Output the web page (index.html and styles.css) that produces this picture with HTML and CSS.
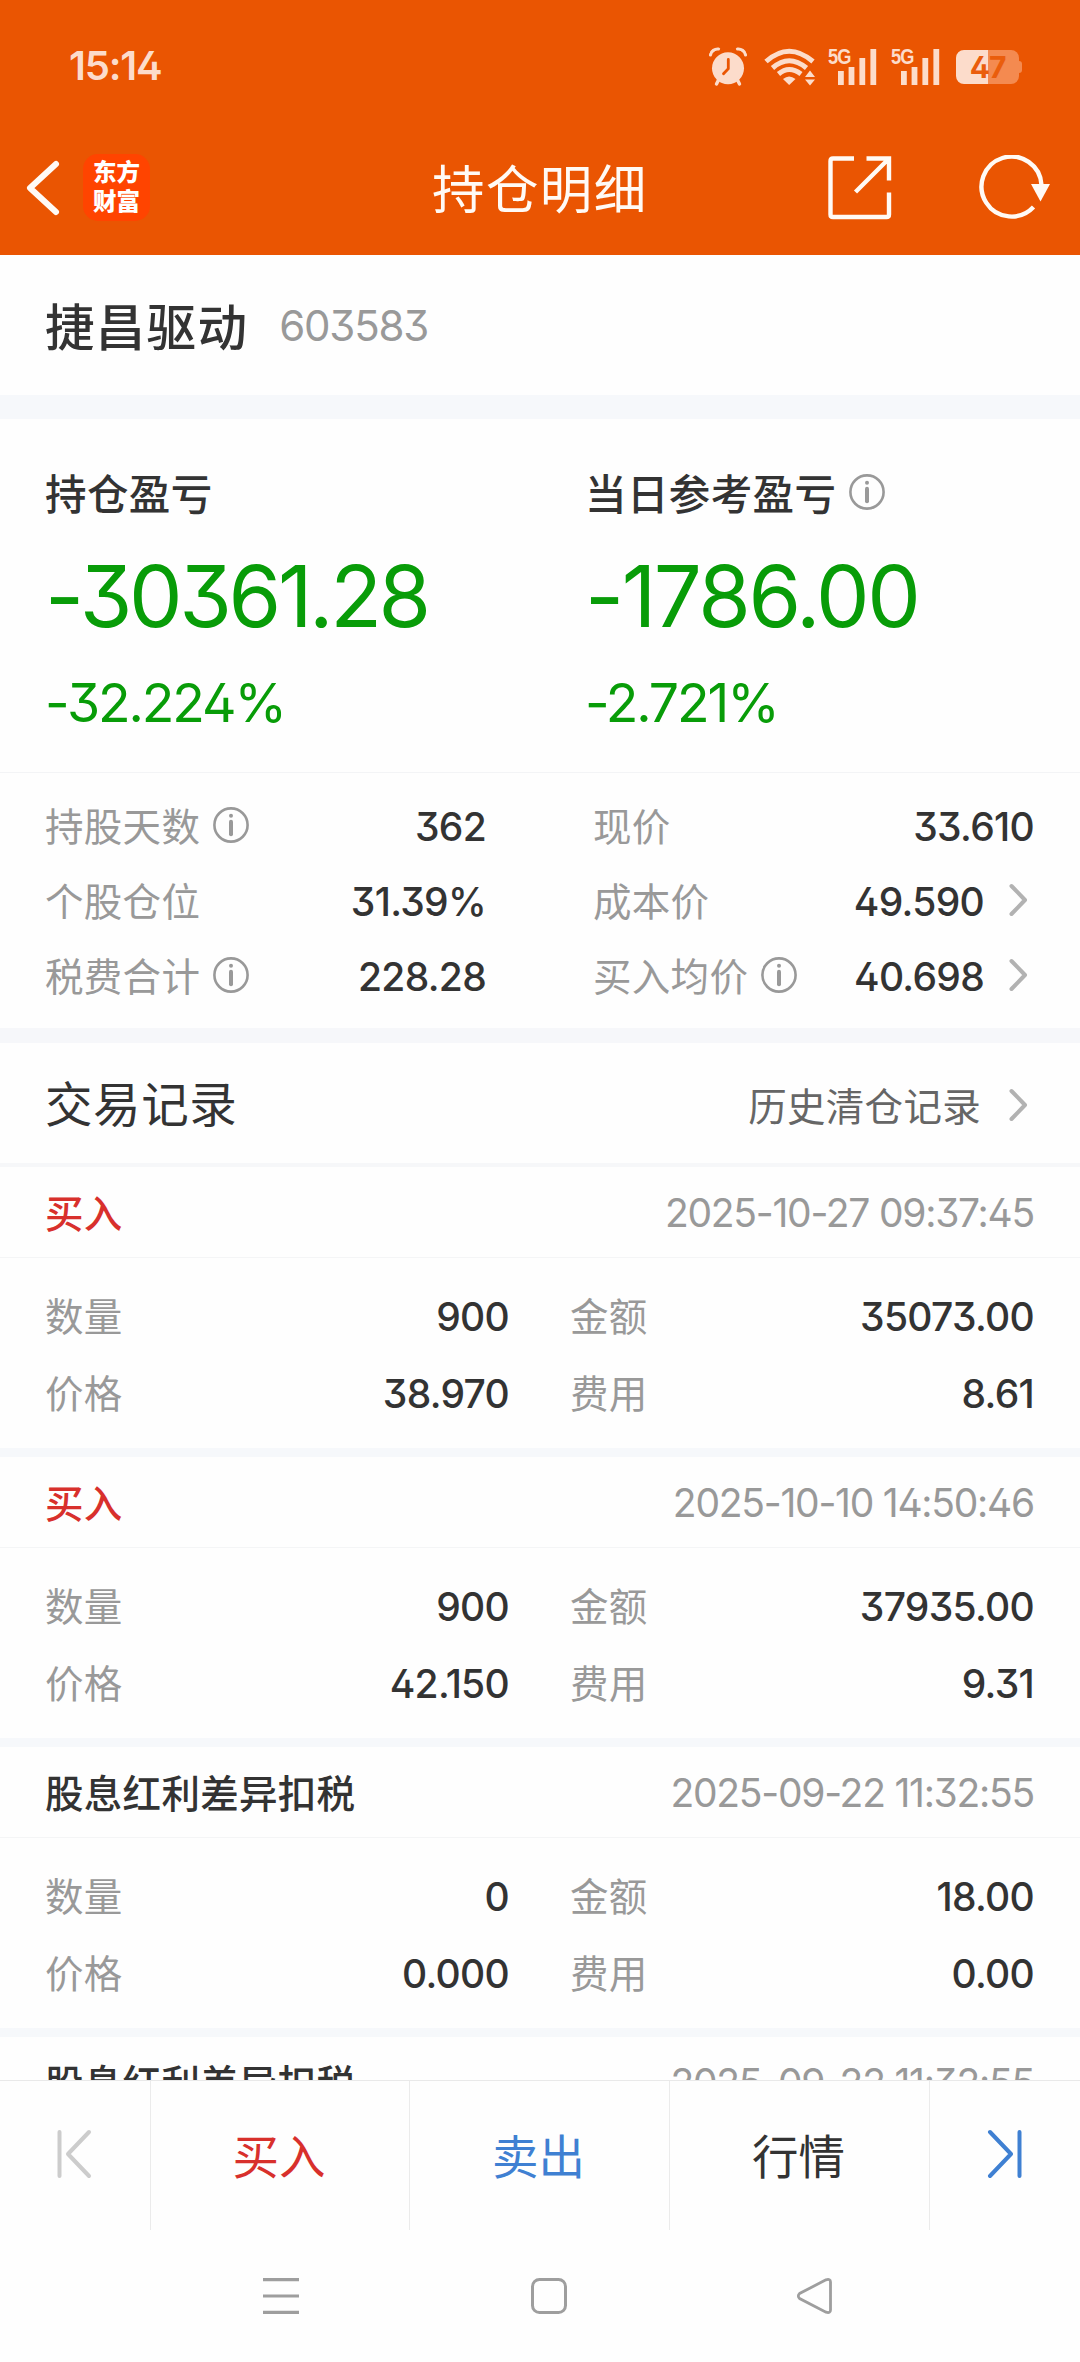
FILE: index.html
```html
<!DOCTYPE html>
<html lang="zh-CN">
<head>
<meta charset="utf-8">
<title>持仓明细</title>
<link rel="stylesheet" href="styles.css">
</head>
<body>
<svg class="defs" width="0" height="0" aria-hidden="true">
  <symbol id="info" viewBox="0 0 36 36"><circle cx="18" cy="18" r="16.6" fill="none" stroke="#999" stroke-width="2.6"/><circle cx="18" cy="8.8" r="2" fill="#999"/><path d="M18 14.8V27.2" stroke="#999" stroke-width="4" stroke-linecap="round"/></symbol>
  <symbol id="chev" viewBox="0 0 20 34"><path d="M2.5 3 16 17 2.5 31" fill="none" stroke="#b2b2b2" stroke-width="4" stroke-linecap="round" stroke-linejoin="round"/></symbol>
  <symbol id="bars" viewBox="0 0 39 36"><path d="M0 22h5.8v14H0zM10.6 18h5.8v18h-5.8zM21.4 9h5.8v27h-5.8zM32.4 0h5.8v36h-5.8z" fill="#fcdccb"/></symbol>
</svg>
<header class="top">
  <div class="status">
    <span class="clock">15:14</span>
    <div class="sysicons">
      <svg class="alarm" width="38" height="40" viewBox="0 0 38 40"><g fill="#fcdccb"><circle cx="19" cy="21.2" r="16"/><path d="M.5 9.500C-.5 4 5 .5 11.500 1 6.500 3 3 6 .5 9.500zM37.500 9.500C38.500 4 33 .5 26.500 1 31.500 3 35 6 37.500 9.500z"/></g><path d="M1.500 8C2 4 6 1.600 9.500 2M36.500 8C36 4 32 1.600 28.500 2" stroke="#fcdccb" stroke-width="3" fill="none" stroke-linecap="round"/><path d="M9.500 33 7.500 37M28.500 33l2 4" stroke="#fcdccb" stroke-width="3.400" stroke-linecap="round"/><path d="M19.300 12.500v9.300l-4.800 5" fill="none" stroke="#ea5502" stroke-width="2.800" stroke-linecap="round"/></svg>
      <svg class="wifi" width="52" height="38" viewBox="0 0 52 38"><g fill="none" stroke="#fcdccb" stroke-width="5"><path d="M2 13.500Q25 -7 49 13.500"/><path d="M8.500 20Q25 5.500 42.500 20"/><path d="M14.500 26Q25 17 37 26"/></g><path d="M19 31Q25 26 31.500 31L25.200 37z" fill="#fcdccb"/><path d="M41 29l5-6.500 5 6.500zM41 31.500h10l-5 6z" fill="#fcdccb"/></svg>
      <div class="sig"><span>5G</span><svg width="39" height="36"><use href="#bars"/></svg></div>
      <div class="sig"><span>5G</span><svg width="39" height="36"><use href="#bars"/></svg></div>
      <div class="battery"><span>47</span></div>
    </div>
  </div>
  <div class="navbar">
    <svg class="back" width="36" height="58" viewBox="0 0 36 58"><path d="M31 5 5 29 31 53" fill="none" stroke="#fffaf5" stroke-width="6" stroke-linecap="round" stroke-linejoin="round"/></svg>
    <div class="logo"><span>东方</span><span>财富</span></div>
    <h1>持仓明细</h1>
    <svg class="share" width="64" height="64" viewBox="0 0 64 64"><path d="M26 2.500H5Q2.500 2.500 2.500 5V58.500Q2.500 61 5 61H58.500Q61 61 61 58.500V36.500M38.500 2.500H61V24.500M60.500 3 27.500 36" fill="none" stroke="#fffaf5" stroke-width="4.400"/></svg>
    <svg class="reload" width="72" height="66" viewBox="0 0 72 66"><path d="M62.500 30A30 30 0 1 0 54.500 52" fill="none" stroke="#fffaf5" stroke-width="4.400"/><path d="M52 29h19l-9.500 17.500z" fill="#fffaf5"/></svg>
  </div>
</header>
<main class="page">
  <section class="stock"><b>捷昌驱动</b><span>603583</span></section>
  <section class="profit">
    <div><h2>持仓盈亏</h2><p class="big">-30361.28</p><p class="pct">-32.224%</p></div>
    <div class="today"><h2>当日参考盈亏<svg class="info"><use href="#info"/></svg></h2><p class="big">-1786.00</p><p class="pct">-2.721%</p></div>
  </section>
  <section class="stats">
    <div class="col">
      <div class="line"><label>持股天数</label><svg class="info"><use href="#info"/></svg><em>362</em></div>
      <div class="line"><label>个股仓位</label><em>31.39%</em></div>
      <div class="line"><label>税费合计</label><svg class="info"><use href="#info"/></svg><em>228.28</em></div>
    </div>
    <div class="col">
      <div class="line"><label>现价</label><em>33.610</em></div>
      <div class="line"><label>成本价</label><em>49.590</em><svg class="chev"><use href="#chev"/></svg></div>
      <div class="line"><label>买入均价</label><svg class="info"><use href="#info"/></svg><em>40.698</em><svg class="chev"><use href="#chev"/></svg></div>
    </div>
  </section>
  <section class="records-head"><h3>交易记录</h3><span>历史清仓记录</span><svg class="chev"><use href="#chev"/></svg></section>
  <article class="rec">
    <div class="rec-head"><b class="buy">买入</b><time>2025-10-27 09:37:45</time></div>
    <div class="rec-body"><label>数量</label><em>900</em><label>金额</label><em>35073.00</em><label>价格</label><em>38.970</em><label>费用</label><em>8.61</em></div>
  </article>
  <article class="rec">
    <div class="rec-head"><b class="buy">买入</b><time>2025-10-10 14:50:46</time></div>
    <div class="rec-body"><label>数量</label><em>900</em><label>金额</label><em>37935.00</em><label>价格</label><em>42.150</em><label>费用</label><em>9.31</em></div>
  </article>
  <article class="rec">
    <div class="rec-head"><b>股息红利差异扣税</b><time>2025-09-22 11:32:55</time></div>
    <div class="rec-body"><label>数量</label><em>0</em><label>金额</label><em>18.00</em><label>价格</label><em>0.000</em><label>费用</label><em>0.00</em></div>
  </article>
  <article class="rec">
    <div class="rec-head"><b>股息红利差异扣税</b><time>2025-09-22 11:32:55</time></div>
  </article>
</main>
<nav class="tabs">
  <a class="prev"><svg width="36" height="50" viewBox="0 0 36 50"><path d="M3.500 3V47M33 3 12 25 33 47" fill="none" stroke="#ccc" stroke-width="4" stroke-linecap="round" stroke-linejoin="round"/></svg></a>
  <a class="t-buy">买入</a><a class="t-sell">卖出</a><a>行情</a>
  <a class="next"><svg width="36" height="50" viewBox="0 0 36 50"><path d="M32.500 3V47M3 3 24 25 3 47" fill="none" stroke="#3f80d2" stroke-width="4" stroke-linecap="round" stroke-linejoin="round"/></svg></a>
</nav>
<footer class="sysnav">
  <svg width="38" height="38" viewBox="0 0 38 38"><path d="M1 2.700H37M1 19H37M1 35.300H37" stroke="#9e9e9e" stroke-width="3.200"/></svg>
  <svg width="38" height="38" viewBox="0 0 38 38"><rect x="3.500" y="2.500" width="33" height="33" rx="7" fill="none" stroke="#9e9e9e" stroke-width="3"/></svg>
  <svg width="38" height="38" viewBox="0 0 38 38"><path d="M30 2.800 3.600 16.500Q1 19 3.600 21.500L30 35.200Q34.500 36.500 34.500 33V5Q34.500 1.500 30 2.800Z" fill="none" stroke="#9e9e9e" stroke-width="2.800"/></svg>
</footer>
</body>
</html>
```

FILE: styles.css
```css
* { box-sizing: border-box; margin: 0; padding: 0; }
body {
  width: 1080px; height: 2362px; overflow: hidden;
  display: flex; flex-direction: column;
  background: #fefefe; color: #333;
  font-family: "Inter", "Noto Sans CJK SC", sans-serif;
  font-feature-settings: "cv09", "cv02";
}
svg { display: block; flex: none; }
.defs { position: absolute; }
em { font-style: normal; }
h1, h2, h3, label, .tabs, .stock b, .rec-head b, .records-head span { font-family: "Noto Sans CJK SC", sans-serif; }

.top { height: 255px; flex: none; background: #ea5502; }
.status { height: 120px; padding: 14px 58px 0 69px; display: flex; align-items: center; justify-content: space-between; }
.clock { color: #fcdccb; font-size: 40px; font-weight: 600; letter-spacing: -1.2px; line-height: 40px; margin-top: -2px; }
.sysicons { display: flex; align-items: center; height: 40px; }
.alarm { margin-right: 17px; }
.wifi { margin-right: 12px; }
.sig { display: flex; width: 50px; height: 36px; margin-right: 13px; color: #fcdccb; }
.sig svg { margin-left: -14px; }
.sig span { font: 700 22px/16px "Liberation Sans", sans-serif; letter-spacing: -1px; width: 24px; transform: scaleX(.83); transform-origin: 0 0; }
.battery { position: relative; width: 63px; height: 34px; border-radius: 8px; margin-right: 3px; margin-left: 2px; background: linear-gradient(90deg, #fcdccb 32px, #f48a50 32px); text-align: center; }
.battery::after { content: ""; position: absolute; right: -3px; top: 11px; width: 3px; height: 12px; border-radius: 0 3px 3px 0; background: #f48a50; }
.battery span { font-size: 30px; font-weight: 700; line-height: 35px; letter-spacing: -1px; color: #ea5d0c; }

.navbar { height: 135px; padding: 0 29px 0 25px; display: flex; align-items: center; }
.logo { width: 67px; height: 67px; margin: 0 0 0 22px; padding-bottom: 4px; border-radius: 15px; background: #ff4400; color: #fff; display: flex; flex-direction: column; align-items: center; justify-content: center; font: 900 23.5px/28.5px "Noto Sans CJK SC", sans-serif; }
.navbar h1 { margin-left: 282px; width: 396px; padding-bottom: 3px; color: #fffaf5; font-size: 52.5px; font-weight: 400; letter-spacing: 1.4px; line-height: 60px; }
.share { margin-right: 87px; }

.page { height: 1825px; flex: none; overflow: hidden; }
.stock { height: 140px; padding: 0 45px; display: flex; align-items: center; }
.stock b { padding-bottom: 2px; font-size: 49.5px; font-weight: 500; letter-spacing: 1.3px; }
.stock span { margin-left: 31px; padding-top: 1px; font-size: 42px; letter-spacing: -1.2px; color: #999; }
.profit { height: 378px; border-top: 24px solid #f6f8fb; border-bottom: 1px solid #f3f4f6; padding: 50px 0 0 45px; display: grid; grid-template-columns: 540px 1fr; }
.profit h2 { display: flex; align-items: center; height: 46px; font-size: 41.500px; font-weight: 500; letter-spacing: .4px; }
.info { width: 36px; height: 36px; }
.profit .info { margin-left: 13px; }
.profit p { color: #089c08; white-space: nowrap; }
.big { font-size: 85px; line-height: 90px; margin-top: 37px; letter-spacing: -3.4px; }
.today .big { letter-spacing: -2.4px; }
.pct { font-size: 53.500px; line-height: 60px; margin-top: 31px; letter-spacing: -2.1px; }

.stats { height: 270px; border-bottom: 15px solid #f6f7fa; padding: 16px 46px 0 45px; display: grid; grid-template-columns: 441px 441px; column-gap: 107px; }
.line { height: 75px; display: flex; align-items: center; }
label { font-size: 38.500px; letter-spacing: .3px; color: #999; font-weight: 400; padding-bottom: 5px; }
em { margin-left: auto; font-size: 39px; font-weight: 500; letter-spacing: -.7px; }
.line .info { margin-left: 13px; margin-bottom: 3px; }
.chev { width: 20px; height: 34px; margin-left: 25px; margin-right: 5px; }
.line .chev { margin-bottom: 3px; }

.records-head { height: 124px; border-bottom: 4px solid #f6f7f9; padding: 0 46px 0 45px; display: flex; align-items: center; }
.records-head h3 { padding-bottom: 3px; font-size: 47.500px; font-weight: 400; letter-spacing: .6px; }
.records-head span { margin-left: auto; padding-top: 2px; font-size: 38.500px; color: #666; letter-spacing: .3px; }
.records-head .chev { margin-left: 28px; margin-top: 3px; }

.rec-head { height: 91px; border-bottom: 1px solid #f4f5f6; padding: 0 46px 0 45px; display: flex; align-items: center; justify-content: space-between; }
.rec-head b { padding-bottom: 2px; font-size: 38.500px; font-weight: 500; letter-spacing: .3px; }
.rec-head .buy { color: #d8302c; }
time { padding-top: 1px; font-size: 39px; color: #999; letter-spacing: -1.25px; }
.rec-body { height: 199px; border-bottom: 9px solid #f6f8fb; padding: 20px 46px 0 45px; display: grid; grid-template: 77px 77px / 111px 353px 172px 353px; align-items: center; }
.rec-body em { margin-left: 0; text-align: right; }
.rec-body label:nth-of-type(even) { padding-left: 61px; }

.tabs { height: 150px; flex: none; border-top: 1px solid #e9e9e9; display: grid; grid-template-columns: 151px 259px 260px 260px 150px; font-size: 46.500px; }
.tabs a { display: flex; align-items: center; justify-content: center; border-right: 1px solid #ebebeb; line-height: 60px; padding: 0 2px 4px 0; }
.tabs a:last-child { border-right: 0; padding-right: 0; }
.t-buy { color: #d8302c; }
.t-sell { color: #3f80d2; }
.sysnav { height: 132px; padding: 0 246px 0 262px; display: flex; align-items: center; justify-content: space-between; }
```
